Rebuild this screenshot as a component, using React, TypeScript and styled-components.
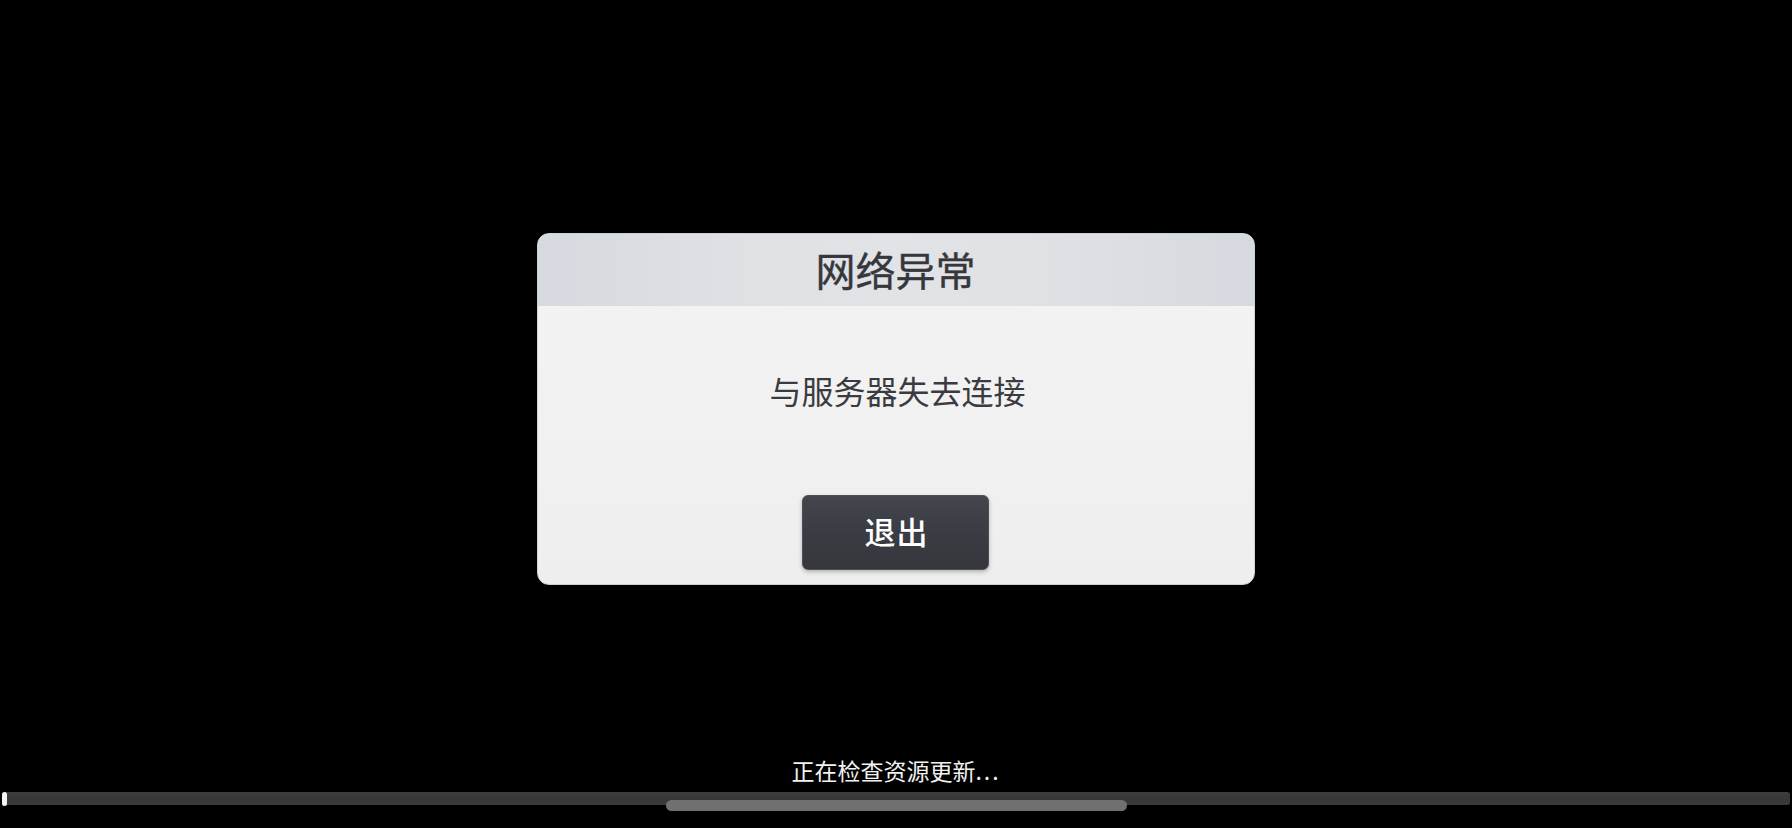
import React from "react";
import styled, { createGlobalStyle } from "styled-components";

const GlobalStyle = createGlobalStyle`
  html, body {
    margin: 0;
    padding: 0;
    background: #000;
    overflow: hidden;
  }
  body {
    font-family: "Noto Sans CJK SC", "Noto Sans", sans-serif;
  }
  #root {
    height: 100vh;
  }
`;

const Page = styled.div`
  height: 828px;
  display: flex;
  flex-direction: column;
  background: #000;
`;

const Stage = styled.main`
  display: flex;
  justify-content: center;
  padding-top: 233px;
  padding-right: 1px;
`;

const Dialog = styled.section`
  width: 718px;
  height: 352px;
  box-sizing: border-box;
  border-radius: 12px;
  border: 1px solid #cfd0d3;
  background: linear-gradient(180deg, #f3f3f3 0%, #f1f1f1 60%, #eeeeee 100%);
  overflow: hidden;
  display: flex;
  flex-direction: column;
`;

const Header = styled.header`
  height: 72px;
  flex: none;
  display: flex;
  align-items: center;
  justify-content: center;
  background: linear-gradient(
    90deg,
    #d6d9df 0%,
    #dfe1e5 30%,
    #e1e3e6 50%,
    #dfe1e5 70%,
    #d6d9df 100%
  );
`;

const Title = styled.h1`
  margin: 0;
  font-size: 40px;
  line-height: 48px;
  font-weight: 400;
  color: #36373c;
  margin-bottom: 3px;
  -webkit-text-stroke: 0.4px #36373c;
`;

const Body = styled.div`
  flex: 1;
  display: flex;
  flex-direction: column;
  align-items: center;
  padding-top: 64px;
`;

const Message = styled.p`
  margin: 0;
  font-size: 32px;
  line-height: 40px;
  font-weight: 400;
  color: #3a3b40;
  padding-left: 4px;
`;

const ExitButton = styled.button`
  margin-top: 85px;
  width: 187px;
  height: 75px;
  border-radius: 6px;
  border: 1px solid #4c4f56;
  background: linear-gradient(180deg, #44464d 0%, #3a3c43 50%, #35373d 100%);
  box-shadow: 0 2px 4px rgba(0, 0, 0, 0.25);
  color: #ffffff;
  font-family: "Noto Sans CJK SC", sans-serif;
  font-size: 31px;
  line-height: 36px;
  font-weight: 500;
  letter-spacing: 1px;
  padding: 0 0 4px 2px;
  cursor: pointer;
  display: flex;
  align-items: center;
  justify-content: center;
`;

const Footer = styled.footer`
  margin-top: auto;
  position: relative;
  display: flex;
  flex-direction: column;
  align-items: center;
  padding-bottom: 23px;
`;

const Status = styled.div`
  font-size: 23px;
  line-height: 26px;
  color: #f2f2f2;
  margin-bottom: 1px;
`;

const Dots = styled.span`
  letter-spacing: 2px;
`;

const Track = styled.div`
  margin-top: 8px;
  align-self: stretch;
  margin-left: 2px;
  margin-right: 2px;
  height: 13px;
  border-radius: 3px;
  background: linear-gradient(180deg, #3e3e3e 0%, #383838 50%, #3b3b3b 100%);
  display: flex;
  align-items: center;
`;

const Knob = styled.div`
  width: 5px;
  height: 14px;
  border-radius: 3px;
  background: #f4f4f4;
`;

const ScrollThumb = styled.div`
  position: absolute;
  top: 43px;
  left: 666px;
  width: 461px;
  height: 11px;
  border-radius: 6px;
  background: #707070;
`;

export default function App() {
  return (
    <>
      <GlobalStyle />
      <Page>
        <Stage>
          <Dialog>
            <Header>
              <Title>网络异常</Title>
            </Header>
            <Body>
              <Message>与服务器失去连接</Message>
              <ExitButton>退出</ExitButton>
            </Body>
          </Dialog>
        </Stage>
        <Footer>
          <Status>
            正在检查资源更新<Dots>...</Dots>
          </Status>
          <Track>
            <Knob />
          </Track>
          <ScrollThumb />
        </Footer>
      </Page>
    </>
  );
}
